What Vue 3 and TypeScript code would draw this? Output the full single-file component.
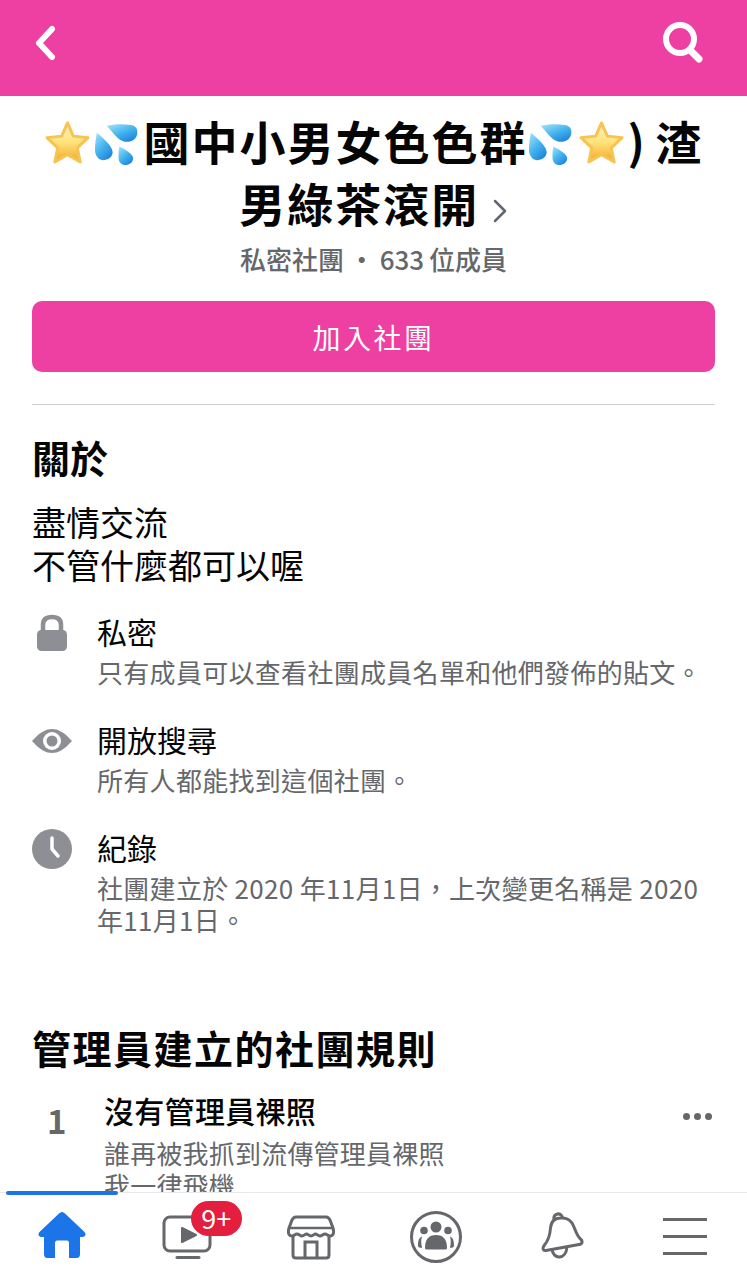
<template>
  <div class="page">
    <header class="topbar">
      <svg class="back" viewBox="0 0 24 36" width="24" height="36">
        <path d="M18 4 L5 18 L18 32" fill="none" stroke="#fff" stroke-width="6" stroke-linecap="round" stroke-linejoin="round" />
      </svg>
      <svg class="search" viewBox="0 0 44 44" width="44" height="44">
        <circle cx="19" cy="19" r="14" fill="none" stroke="#fff" stroke-width="6" />
        <path d="M29 30 L38 39" fill="none" stroke="#fff" stroke-width="7" stroke-linecap="round" />
      </svg>
    </header>

    <main class="content">
      <section class="head">
        <h1 class="title">
          <svg class="emoji" viewBox="0 0 48 48">
            <defs>
              <linearGradient id="starFill" x1="0" y1="0" x2="0" y2="1">
                <stop offset="0" stop-color="#fff3c4" />
                <stop offset="0.5" stop-color="#ffe27a" />
                <stop offset="1" stop-color="#f2a625" />
              </linearGradient>
              <linearGradient id="dropFill" x1="0" y1="0" x2="0.7" y2="1">
                <stop offset="0" stop-color="#a5e4fb" />
                <stop offset="0.55" stop-color="#46b4ee" />
                <stop offset="1" stop-color="#1f86dc" />
              </linearGradient>
            </defs>
            <path d="M24 4 L30 17.500 L45 19 L34 29.500 L37 44 L24 36.500 L11 44 L14 29.500 L3 19 L18 17.500 Z" fill="url(#starFill)" stroke="#f6c452" stroke-width="3" stroke-linejoin="round" />
          </svg><svg class="emoji" viewBox="0 0 48 48">
            <path d="M13 7 C20 5 30 5 38 6 C44 7 45 12 44 16 C42 23 33 25 28 22 C22 19 18 12 13 7 Z" fill="url(#dropFill)" />
            <path d="M3 14 C10 20 19 28 19 34 C19 39 14 42 9 42 C4 42 1 37 1 31 C1 25 2 19 3 14 Z" fill="url(#dropFill)" />
            <path d="M26 28 C32 31 40 36 40 40 C40 44 36 47 32 47 C28 47 25 44 25 39 C25 35 25 31 26 28 Z" fill="url(#dropFill)" />
          </svg>國中小男女色色群<svg class="emoji" viewBox="0 0 48 48">
            <path d="M13 7 C20 5 30 5 38 6 C44 7 45 12 44 16 C42 23 33 25 28 22 C22 19 18 12 13 7 Z" fill="url(#dropFill)" />
            <path d="M3 14 C10 20 19 28 19 34 C19 39 14 42 9 42 C4 42 1 37 1 31 C1 25 2 19 3 14 Z" fill="url(#dropFill)" />
            <path d="M26 28 C32 31 40 36 40 40 C40 44 36 47 32 47 C28 47 25 44 25 39 C25 35 25 31 26 28 Z" fill="url(#dropFill)" />
          </svg><svg class="emoji" viewBox="0 0 48 48">
            <path d="M24 4 L30 17.500 L45 19 L34 29.500 L37 44 L24 36.500 L11 44 L14 29.500 L3 19 L18 17.500 Z" fill="url(#starFill)" stroke="#f6c452" stroke-width="3" stroke-linejoin="round" />
          </svg>) 渣<br />男綠茶滾開
          <svg class="chev" viewBox="0 0 16 26" width="16" height="26">
            <path d="M3 3 L13 13 L3 23" fill="none" stroke="#606770" stroke-width="2.500" stroke-linecap="round" stroke-linejoin="round" />
          </svg>
        </h1>
        <p class="meta">私密社團 · 633 位成員</p>
        <button class="join">加入社團</button>
      </section>

      <section class="about">
        <h2 class="about-title">關於</h2>
        <p class="about-desc">盡情交流<br />不管什麼都可以喔</p>

        <div v-for="row in infoRows" :key="row.title" class="info">
          <div class="info-icon">
            <svg v-if="row.icon === 'lock'" viewBox="0 0 40 40" width="40" height="40">
              <path d="M11 19 V12 C11 6 15 4 20 4 C25 4 29 6 29 12 V19" fill="none" stroke="#8d8f94" stroke-width="4.500" />
              <rect x="5" y="17" width="30" height="21" rx="4.500" fill="#8d8f94" />
            </svg>
            <svg v-else-if="row.icon === 'eye'" viewBox="0 0 40 24" width="40" height="24">
              <path d="M0 12 C8 3 14 0 20 0 C26 0 32 3 40 12 C32 21 26 24 20 24 C14 24 8 21 0 12 Z" fill="#8d8f94" />
              <circle cx="20" cy="12" r="9" fill="#fff" />
              <circle cx="20" cy="12" r="5.500" fill="#8d8f94" />
            </svg>
            <svg v-else viewBox="0 0 40 40" width="40" height="40">
              <circle cx="20" cy="20" r="20" fill="#8d8f94" />
              <path d="M20 9 V20 L26 27" fill="none" stroke="#fff" stroke-width="3.500" stroke-linecap="round" stroke-linejoin="round" />
            </svg>
          </div>
          <div class="info-body">
            <div class="info-title">{{ row.title }}</div>
            <div class="info-sub">{{ row.sub }}</div>
          </div>
        </div>
      </section>

      <section class="rules">
        <h2 class="rules-title">管理員建立的社團規則</h2>
        <div class="rule">
          <div class="rule-num">1</div>
          <div class="rule-body">
            <div class="rule-name">沒有管理員裸照</div>
            <div class="rule-sub">誰再被我抓到流傳管理員裸照<br />我一律飛機</div>
          </div>
          <div class="rule-more"><i></i><i></i><i></i></div>
        </div>
      </section>
    </main>

    <nav class="tabs">
      <span class="indicator"></span>
      <div class="tab">
        <svg viewBox="0 0 48 46" width="48" height="46">
          <path d="M24 0 C25 0 26 0.500 27 1.500 L46.500 20 C48.500 22 47.500 25 44.500 25 H42 V42 C42 44.500 41 46 38.500 46 H31 V31 C31 29.500 30 28.500 29 28.500 H19 C18 28.500 17 29.500 17 31 V46 H9.500 C7 46 6 44.500 6 42 V25 H3.500 C0.500 25 -0.500 22 1.500 20 L21 1.500 C22 0.500 23 0 24 0 Z" fill="#1b74e8" />
        </svg>
      </div>
      <div class="tab">
        <div class="video">
          <svg viewBox="0 0 50 48" width="50" height="48">
            <rect x="2" y="5" width="46" height="34" rx="6" fill="none" stroke="#65676b" stroke-width="3" />
            <path d="M20 16 L34 23 L20 30 Z" fill="#65676b" stroke="#65676b" stroke-width="2" stroke-linejoin="round" />
            <path d="M15 45.500 H37" stroke="#65676b" stroke-width="3" stroke-linecap="round" />
          </svg>
          <span class="badge">9+</span>
        </div>
      </div>
      <div class="tab">
        <svg viewBox="0 0 48 48" width="48" height="48">
          <path d="M9 5 H39 C41 5 42 6 43 8 L46 16 C47.500 21 46 24 43 24 C41 24 40 22 38 22 C36 22 35 24 33 24 C31 24 30 22 28.500 22 C27 22 26 24 24 24 C22 24 21 22 19.500 22 C18 22 17 24 15 24 C13 24 12 22 10 22 C8 22 7 24 5 24 C2 24 0.500 21 2 16 L5 8 C6 6 7 5 9 5 Z" fill="none" stroke="#65676b" stroke-width="3" stroke-linejoin="round" />
          <path d="M2 16 H46" stroke="#65676b" stroke-width="2.500" />
          <path d="M6 24 V43 C6 45 7 46 9 46 H39 C41 46 42 45 42 43 V24" fill="none" stroke="#65676b" stroke-width="3" />
          <path d="M18 46 V30 H30 V46" fill="none" stroke="#65676b" stroke-width="3" />
        </svg>
      </div>
      <div class="tab">
        <svg class="groups" viewBox="0 0 52 52" width="52" height="52">
          <circle cx="26" cy="26" r="24.500" fill="none" stroke="#65676b" stroke-width="3" />
          <circle cx="26" cy="16" r="5.500" fill="#65676b" />
          <circle cx="14" cy="19.500" r="3.800" fill="#65676b" />
          <circle cx="38" cy="19.500" r="3.800" fill="#65676b" />
          <path d="M15 37 C15 28 19 24 26 24 C33 24 37 28 37 37 C37 38 36 38.500 35 38.500 H17 C16 38.500 15 38 15 37 Z" fill="#65676b" />
          <path d="M8 35 C8 29 9 27 12 25.500 C11 28 11 32 12 37 C10 37 8 36 8 35 Z" fill="#65676b" />
          <path d="M44 35 C44 29 43 27 40 25.500 C41 28 41 32 40 37 C42 37 44 36 44 35 Z" fill="#65676b" />
        </svg>
      </div>
      <div class="tab">
        <svg class="bell" viewBox="0 0 44 50" width="44" height="50">
          <path d="M20 6 C13 6 10 10 9.500 16 C9 23 7 29 3.500 33 C1 36 2 39 5 38.500 L38 32.500 C41.500 32 42 29 39.500 27 C36 24 35 20 33 15 C31 9 26 5.500 20 6 Z" fill="none" stroke="#65676b" stroke-width="3" stroke-linejoin="round" />
          <path d="M13 7.500 C12 2 18 0.500 20.500 3.500 C21.500 4.500 21.500 5.500 21.500 6.500" fill="none" stroke="#65676b" stroke-width="3" />
          <path d="M11 37 C12 48 25 48 26 35" fill="none" stroke="#65676b" stroke-width="3" />
        </svg>
      </div>
      <div class="tab">
        <div class="burger"><i></i><i></i><i></i></div>
      </div>
    </nav>
  </div>
</template>

<script setup lang="ts">
type InfoRow = { icon: "lock" | "eye" | "clock"; title: string; sub: string };

const infoRows: InfoRow[] = [
  { icon: "lock", title: "私密", sub: "只有成員可以查看社團成員名單和他們發佈的貼文。" },
  { icon: "eye", title: "開放搜尋", sub: "所有人都能找到這個社團。" },
  { icon: "clock", title: "紀錄", sub: "社團建立於 2020 年11月1日，上次變更名稱是 2020 年11月1日。" },
];
</script>

<style>
body {
  background: #fff;
}
</style>

<style scoped>
.page {
  width: 747px;
  height: 1280px;
  display: flex;
  flex-direction: column;
  overflow: hidden;
  background: #fff;
  color: #050505;
  font-family: "Noto Sans CJK TC", "Noto Sans", sans-serif;
}
.topbar {
  flex: none;
  height: 96px;
  background: #ee3fa2;
  display: flex;
  justify-content: space-between;
  padding: 25px 42px 0 34px;
  box-sizing: border-box;
}
.search {
  margin-top: -5px;
}
.content {
  flex: 1;
  min-height: 0;
  overflow: hidden;
  padding: 0 32px;
}
.head {
  text-align: center;
  padding-top: 13px;
  padding-bottom: 32px;
  border-bottom: 1px solid #ccced1;
}
.title {
  margin: 0 -10px;
  font-size: 46px;
  line-height: 62px;
  letter-spacing: 2px;
  word-spacing: -4px;
  font-weight: 700;
}
.emoji {
  width: 47px;
  height: 47px;
  vertical-align: -6px;
  margin-right: 3px;
}
.chev {
  vertical-align: -2px;
  margin-left: 4px;
}
.meta {
  margin: 8px 0 0;
  font-size: 26px;
  line-height: 36px;
  word-spacing: -1px;
  color: #65676b;
  font-weight: 500;
}
.join {
  display: block;
  width: 100%;
  height: 71px;
  margin-top: 24px;
  border: none;
  border-radius: 10px;
  background: #ee3fa2;
  color: #fff;
  font-family: inherit;
  font-size: 28px;
  letter-spacing: 2.500px;
  font-weight: 400;
}
.about {
  padding-top: 25px;
}
.about-title {
  margin: 0;
  font-size: 38px;
  line-height: 54px;
  font-weight: 700;
}
.about-desc {
  margin: 16px 0 0;
  font-size: 34px;
  line-height: 43px;
}
.info {
  display: flex;
  margin-top: 24px;
}
.info + .info {
  margin-top: 30px;
}
.info-icon {
  flex: none;
  width: 65px;
  height: 40px;
  margin-top: 3px;
  display: flex;
  align-items: center;
}
.info-title {
  font-size: 30px;
  line-height: 42px;
}
.info-sub {
  margin-top: 4px;
  font-size: 26px;
  line-height: 32px;
  letter-spacing: 0.300px;
  color: #65676b;
}
.rules {
  padding-top: 83px;
}
.rules-title {
  margin: 0;
  font-size: 39px;
  line-height: 56px;
  letter-spacing: 1.500px;
  font-weight: 700;
}
.rule {
  display: flex;
  margin-top: 14px;
}
.rule-num {
  flex: none;
  width: 72px;
  padding-top: 11px;
  padding-left: 15px;
  box-sizing: border-box;
  font-size: 33px;
  line-height: 40px;
  font-weight: 700;
  color: #65676b;
}
.rule-body {
  flex: 1;
}
.rule-name {
  font-size: 30px;
  line-height: 42px;
  letter-spacing: 0.300px;
  font-weight: 500;
}
.rule-sub {
  margin-top: 6px;
  font-size: 26px;
  line-height: 32px;
  letter-spacing: 0.200px;
  color: #65676b;
}
.rule-more {
  display: flex;
  gap: 4px;
  margin-top: 24px;
  height: 7px;
  margin-right: 3px;
}
.rule-more i {
  width: 7px;
  height: 7px;
  border-radius: 50%;
  background: #65676b;
}
.tabs {
  flex: none;
  position: relative;
  height: 88px;
  box-sizing: border-box;
  background: #fff;
  border-top: 1px solid #e8e9eb;
  display: grid;
  grid-template-columns: repeat(6, 1fr);
  align-items: start;
  padding-top: 19px;
}
.indicator {
  position: absolute;
  left: 6px;
  top: -2px;
  width: 112px;
  height: 4px;
  border-radius: 2px;
  background: #1b74e8;
}
.tab {
  display: flex;
  justify-content: center;
}
.video {
  position: relative;
  width: 50px;
  height: 48px;
}
.badge {
  position: absolute;
  left: 29px;
  top: -11px;
  width: 51px;
  height: 35px;
  border-radius: 18px;
  background: #e41e3f;
  color: #fff;
  font-size: 27px;
  line-height: 34px;
  text-align: center;
}
.groups {
  margin-top: -1px;
}
.bell {
  margin-left: 5px;
}
.burger {
  display: flex;
  flex-direction: column;
  gap: 14px;
  padding-top: 6px;
}
.burger i {
  display: block;
  width: 44px;
  height: 3px;
  background: #65676b;
}
</style>
